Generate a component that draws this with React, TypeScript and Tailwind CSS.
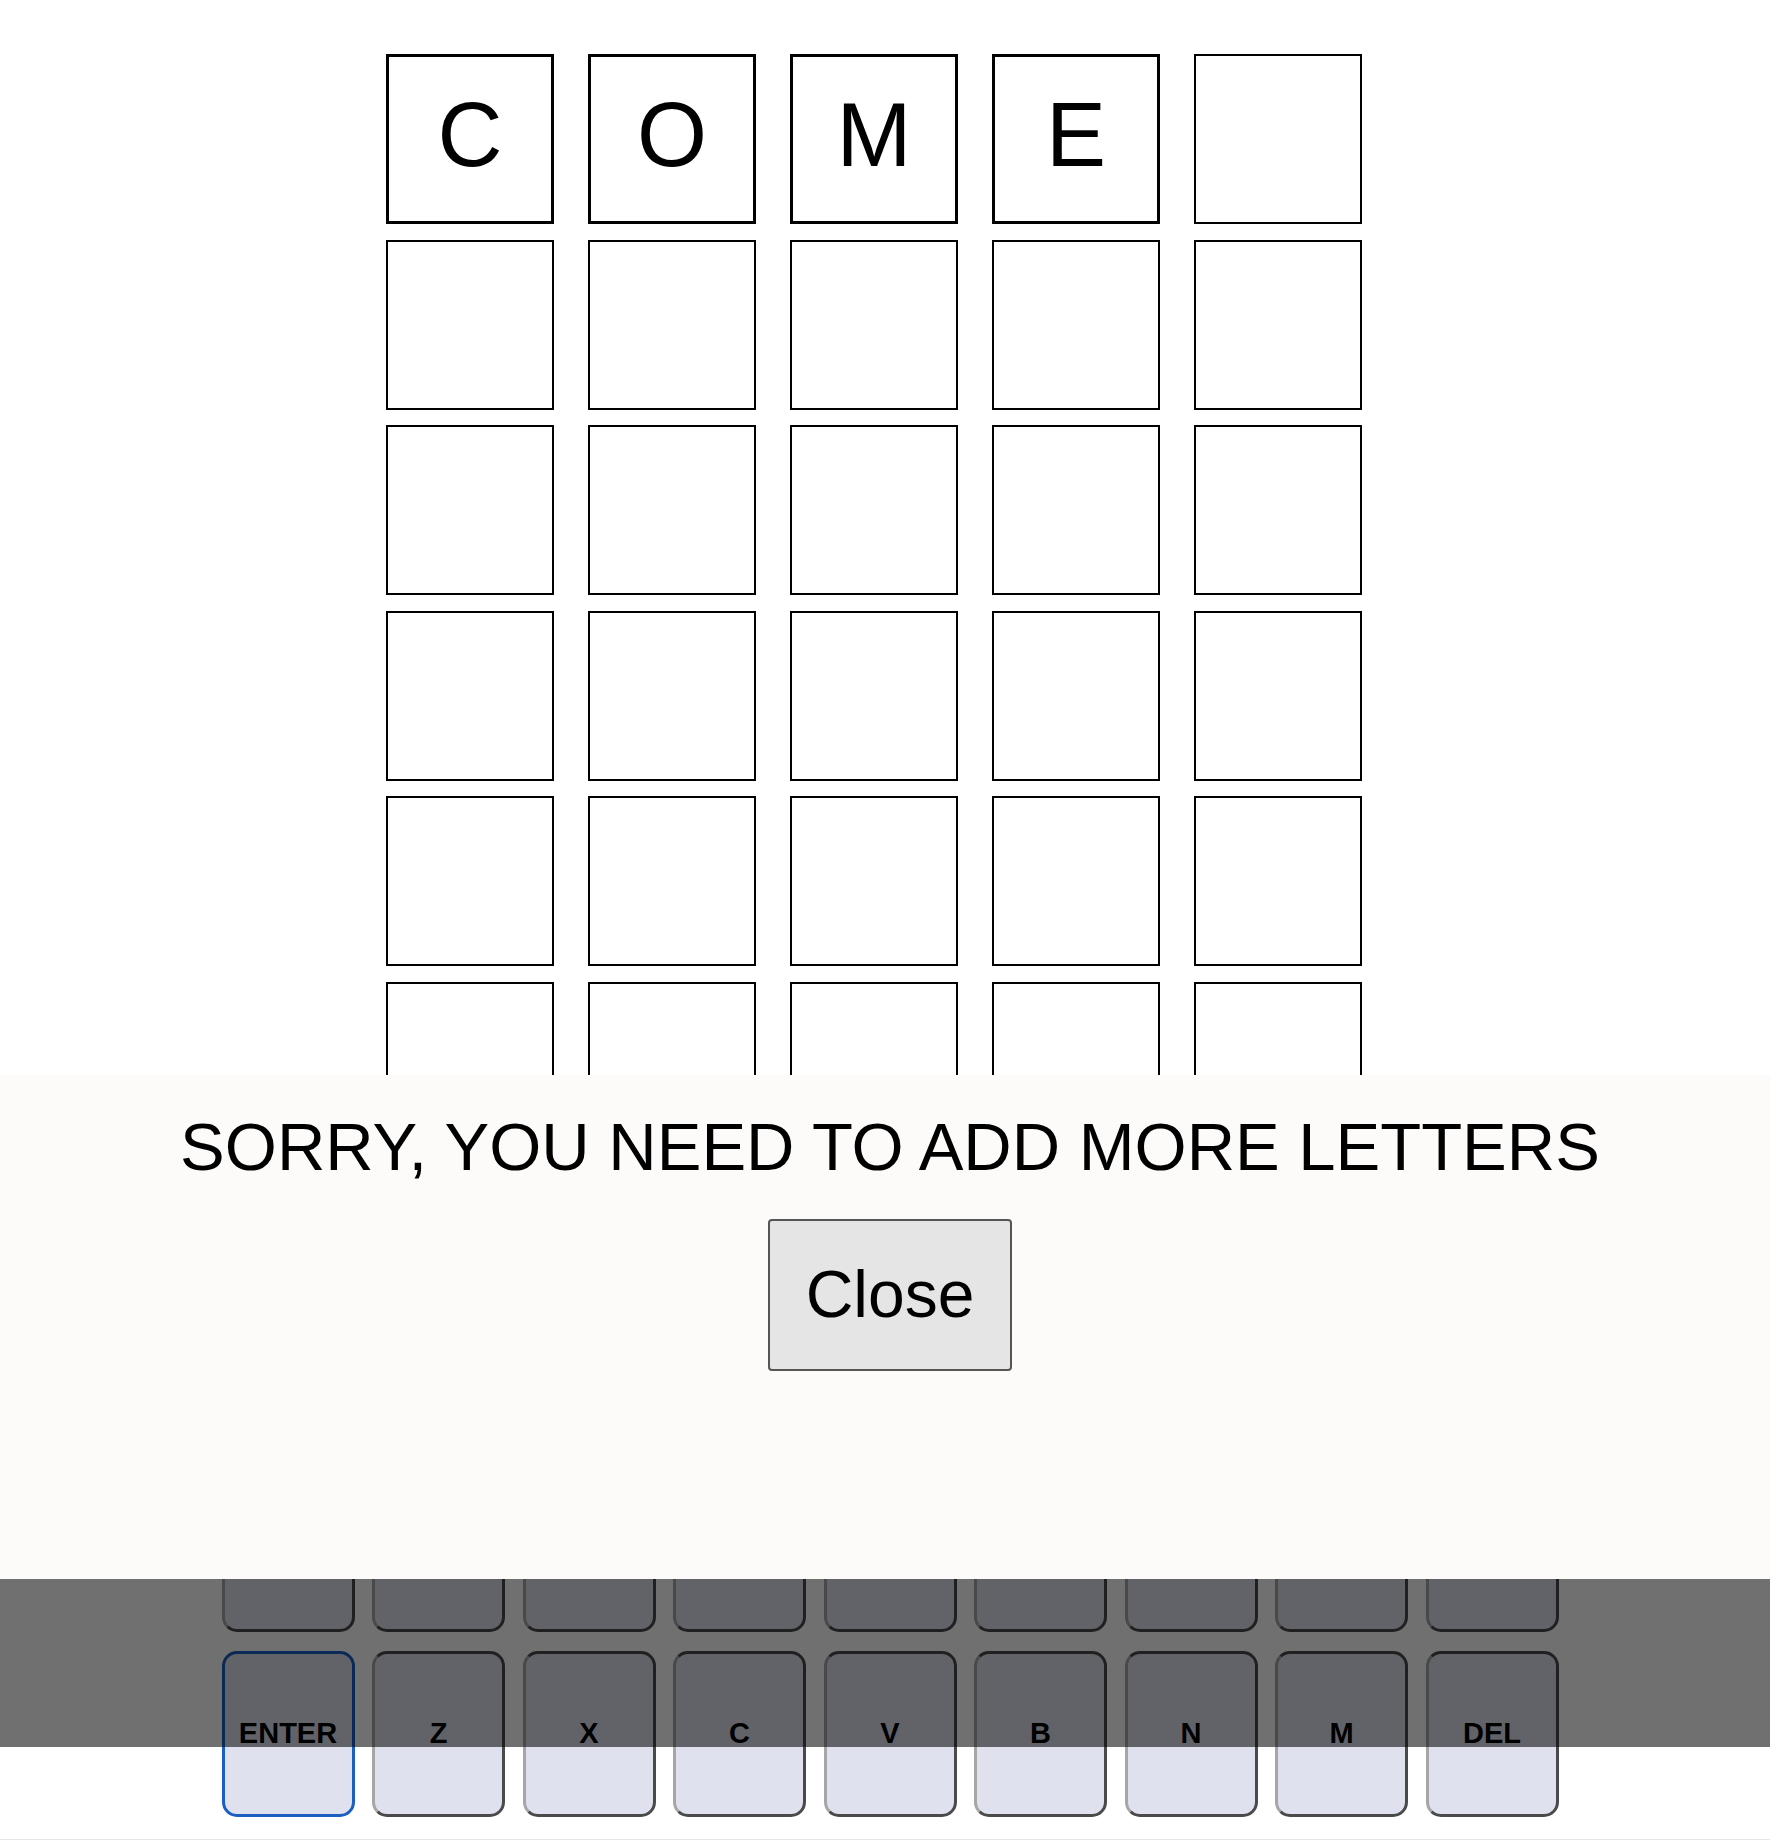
import React from "react";

const guess = ["C", "O", "M", "E", ""];
const emptyRows = 5;

const keyRows = [
    ["Q", "W", "E", "R", "T", "Y", "U", "I", "O", "P"],
    ["A", "S", "D", "F", "G", "H", "J", "K", "L"],
    ["ENTER", "Z", "X", "C", "V", "B", "N", "M", "DEL"],
];

function Tile({ letter }: { letter: string }) {
    return (
        <div
            className={
                letter
                    ? "w-[168px] h-[170px] flex items-center justify-center border-[3px] border-black bg-white text-[90px] leading-none text-black pb-[8px]"
                    : "w-[168px] h-[170px] border-2 border-black bg-white"
            }
        >
            {letter}
        </div>
    );
}

function Key({ label }: { label: string }) {
    const isEnter = label === "ENTER";
    return (
        <button
            className={
                isEnter
                    ? "w-[133px] h-[166px] shrink-0 rounded-[15px] border-[3px] border-[#1b5fc2] bg-[#dfe2ee] text-[29px] font-bold text-black flex items-center justify-center"
                    : "w-[133px] h-[166px] shrink-0 rounded-[15px] border-[3px] border-[#4a4a4a] border-l-[#a6a6a6] bg-[#dfe2ee] text-[29px] font-bold text-black flex items-center justify-center"
            }
        >
            {label}
        </button>
    );
}

export default function App() {
    return (
        <div
            className="relative w-full bg-white"
            style={{ fontFamily: '"Liberation Sans", Arial, sans-serif' }}
        >
            {/* board */}
            <section className="flex justify-center pt-[54px] pr-[22px]">
                <div className="flex flex-col gap-[15.5px]">
                    <div className="flex gap-[34px]">
                        {guess.map((l, i) => (
                            <Tile key={i} letter={l} />
                        ))}
                    </div>
                    {Array.from({ length: emptyRows }).map((_, r) => (
                        <div key={r} className="flex gap-[34px]">
                            {Array.from({ length: 5 }).map((__, c) => (
                                <Tile key={c} letter="" />
                            ))}
                        </div>
                    ))}
                </div>
            </section>

            {/* keyboard */}
            <section className="flex flex-col items-center gap-[19px] pt-[129px] pb-[22px] pl-[10px] border-b border-[#e6e6e6]">
                {keyRows.map((row, i) => (
                    <div key={i} className="flex gap-[17.5px]">
                        {row.map((k) => (
                            <Key key={k} label={k} />
                        ))}
                    </div>
                ))}
            </section>

            {/* modal */}
            <div className="absolute left-0 right-0 top-[1075px] flex flex-col">
                <div className="h-[504px] bg-[#fcfbfa] flex flex-col items-center pt-[35px] pl-[10px]">
                    <h2 className="text-[67px] leading-[74px] text-black">
                        SORRY, YOU NEED TO ADD MORE LETTERS
                    </h2>
                    <button className="mt-[35px] w-[244px] h-[152px] rounded-[4px] border-2 border-[#555555] bg-[#e5e5e5] text-[66px] text-black pb-[2px]">
                        Close
                    </button>
                </div>
                <div className="h-[168px] bg-[rgba(0,0,0,0.56)]" />
            </div>
        </div>
    );
}
